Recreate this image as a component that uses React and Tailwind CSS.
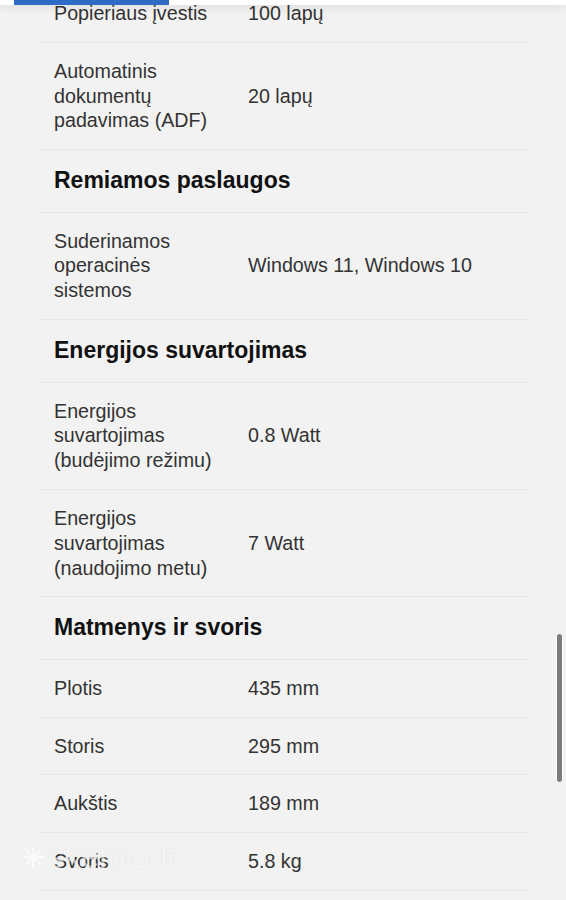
import React from 'react'

const SECTIONS = [
  {
    rows: [
      ['Popieriaus įvestis', '100 lapų'],
      ['Automatinis dokumentų padavimas (ADF)', '20 lapų'],
    ],
  },
  {
    title: 'Remiamos paslaugos',
    rows: [['Suderinamos operacinės sistemos', 'Windows 11, Windows 10']],
  },
  {
    title: 'Energijos suvartojimas',
    rows: [
      ['Energijos suvartojimas (budėjimo režimu)', '0.8 Watt'],
      ['Energijos suvartojimas (naudojimo metu)', '7 Watt'],
    ],
  },
  {
    title: 'Matmenys ir svoris',
    rows: [
      ['Plotis', '435 mm'],
      ['Storis', '295 mm'],
      ['Aukštis', '189 mm'],
      ['Svoris', '5.8 kg'],
    ],
  },
]

function SpecRow({ label, value }) {
  return (
    <div className="grid grid-cols-[194px_1fr] items-center border-b border-[#e6e6e6] py-4 pl-[14px] text-[19.7px] leading-[24.8px] text-[#333]">
      <div className="pr-[28px]">{label}</div>
      <div>{value}</div>
    </div>
  )
}

export default function App() {
  return (
    <div
      className="relative h-[900px] overflow-hidden bg-[#f2f2f2]"
      style={{ fontFamily: '"Liberation Sans", Arial, sans-serif' }}
    >
      {/* top sticky bar */}
      <div className="absolute left-0 right-0 top-0 z-10 h-[5px] bg-white shadow-[0_2px_8px_rgba(0,0,0,0.12)]">
        <div className="ml-[14px] h-[5px] w-[155px] bg-[#2d6bc6]" />
      </div>

      <div className="mx-[38px] ml-[40px] mt-[-15px]">
        {SECTIONS.map((s, i) => (
          <div key={i}>
            {s.title && (
              <div className="border-b border-[#e6e6e6] py-4 pl-[14px] text-[23px] font-bold leading-[29.5px] text-[#111]">
                {s.title}
              </div>
            )}
            {s.rows.map(([l, v]) => (
              <SpecRow key={l} label={l} value={v} />
            ))}
          </div>
        ))}
      </div>

      {/* scrollbar */}
      <div className="absolute left-[556px] top-[633px] h-[150px] w-[7px] rounded-full border border-white bg-[#7b7b7b]" />

      {/* watermark */}
      <div className="pointer-events-none absolute left-[20px] top-[840px] flex items-center gap-[2px] text-[33px] leading-none text-white/60 [text-shadow:0_0_2px_rgba(0,0,0,0.08)]">
        <svg width="26" height="26" viewBox="0 0 24 24" fill="none" stroke="currentColor" strokeWidth="2">
          <path d="M12 2v20M2 12h20M5 5l14 14M19 5L5 19" />
        </svg>
        <span>skelbiu.lt</span>
      </div>
    </div>
  )
}
